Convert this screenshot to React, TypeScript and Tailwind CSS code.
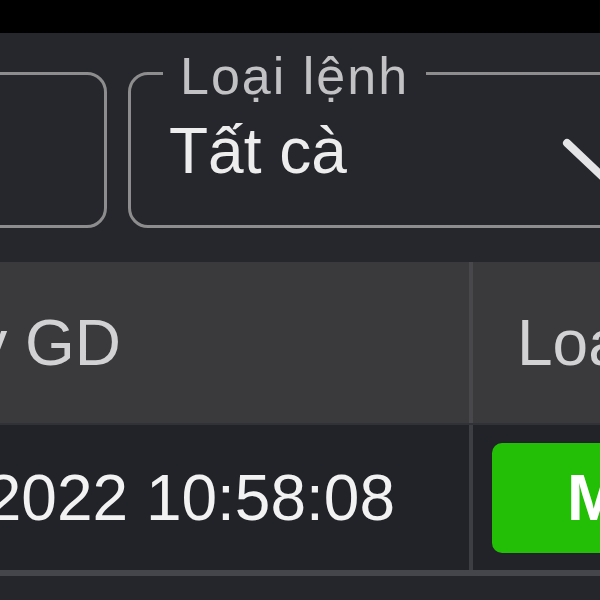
export default function App() {
  return (
    <div className="w-[600px] h-[600px] overflow-hidden bg-[#25262b] font-['Liberation_Sans',Arial,sans-serif]">
      {/* top bar */}
      <div className="h-[33px] bg-black" />

      {/* filters */}
      <div className="h-[229px] pt-[39px] flex gap-[21px] bg-[#26272c]">
        <div className="shrink-0 w-[300px] -ml-[193px] h-[156px] border-[3px] border-[#8d8d8d] rounded-[20px]" />
        <div className="relative shrink-0 w-[700px] h-[156px] border-[3px] border-[#8d8d8d] rounded-[20px] pl-[38px] pt-[44px]">
          <span className="absolute top-[-25px] left-[32px] px-[17px] bg-[#26272c] text-[52px] leading-none tracking-[2px] text-[#c2c2c4] whitespace-nowrap">
            Loại lệnh
          </span>
          <div className="text-[64px] leading-none text-[#ededed] whitespace-nowrap">Tất cà</div>
          <svg
            className="absolute left-[430px] top-[62px]"
            width="90"
            height="60"
            viewBox="0 0 90 60"
            fill="none"
          >
            <path d="M6 6 L44 42 L82 6" stroke="#e4e4e6" strokeWidth="8" strokeLinecap="round" strokeLinejoin="round" />
          </svg>
        </div>
      </div>

      {/* table header */}
      <div className="flex h-[163px] bg-[#3a3a3d] border-b-2 border-[#313237]">
        <div className="shrink-0 w-[704px] -ml-[231px] border-r-[4px] border-[#48484c] flex items-center justify-end pr-[348px]">
          <span className="text-[64px] leading-none text-[#d2d2d4] whitespace-nowrap">Ngày GD</span>
        </div>
        <div className="shrink-0 w-[400px] flex items-center pl-[44px]">
          <span className="text-[64px] leading-none text-[#d2d2d4] whitespace-nowrap">Loại lệnh</span>
        </div>
      </div>

      {/* table row */}
      <div className="flex h-[151px] bg-[#222329] border-b-[6px] border-[#45464b]">
        <div className="shrink-0 w-[704px] -ml-[231px] border-r-[4px] border-[#3d3e44] flex items-center justify-end pr-[74px]">
          <span className="text-[64px] leading-none text-[#f2f2f2] whitespace-nowrap">26/08/2022 10:58:08</span>
        </div>
        <div className="shrink-0 w-[400px] flex items-center pl-[19px]">
          <div className="h-[110px] rounded-[10px] bg-[#23bf06] flex items-center pl-[75px] pr-[70px]">
            <span className="text-[64px] leading-none font-bold text-white whitespace-nowrap">MUA</span>
          </div>
        </div>
      </div>
    </div>
  );
}
